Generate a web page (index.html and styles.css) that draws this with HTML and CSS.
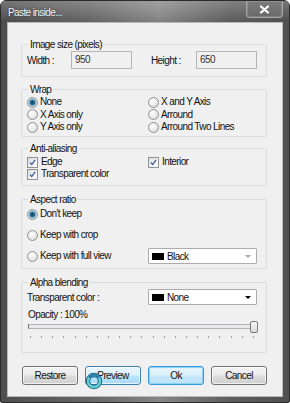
FILE: index.html
```html
<!DOCTYPE html>
<html lang="en">
<head>
    <meta charset="UTF-8">
    <title>Paste inside...</title>
    <link rel="stylesheet" href="styles.css">
</head>
<body>

    <div class="window">
        <!-- Title bar -->
        <div class="titlebar">
            <span class="title">Paste inside...</span>
            <span class="close">
                <svg width="11" height="9" viewBox="0 0 11 9"><path d="M2 1.5 L9 7.5 M9 1.5 L2 7.5" stroke="#fff" stroke-width="2.2" stroke-linecap="round"/></svg>
            </span>
        </div>

        <div class="client">
            <!-- Image size -->
            <div class="group g-size">
                <div class="group-title">Image size (pixels)</div>
                <div class="size-row">
                    <span class="size-label">Width :</span>
                    <span class="field">950</span>
                    <span class="size-label second">Height :</span>
                    <span class="field">650</span>
                </div>
            </div>

            <!-- Wrap -->
            <div class="group g-wrap">
                <div class="group-title">Wrap</div>
                <div class="options wrap-options">
                    <span class="radio checked">None</span>
                    <span class="radio">X and Y Axis</span>
                    <span class="radio">X Axis only</span>
                    <span class="radio">Arround</span>
                    <span class="radio">Y Axis only</span>
                    <span class="radio">Arround Two Lines</span>
                </div>
            </div>

            <!-- Anti-aliasing -->
            <div class="group g-aa">
                <div class="group-title">Anti-aliasing</div>
                <div class="options aa-options">
                    <span class="check"><svg class="box" width="11" height="11" viewBox="0 0 11 11"><path d="M2.5 5.5 L4.6 8 L8.6 2.2" fill="none" stroke="#3c5596" stroke-width="1.5"/></svg>Edge</span>
                    <span class="check"><svg class="box" width="11" height="11" viewBox="0 0 11 11"><path d="M2.5 5.5 L4.6 8 L8.6 2.2" fill="none" stroke="#3c5596" stroke-width="1.5"/></svg>Interior</span>
                    <span class="check"><svg class="box" width="11" height="11" viewBox="0 0 11 11"><path d="M2.5 5.5 L4.6 8 L8.6 2.2" fill="none" stroke="#3c5596" stroke-width="1.5"/></svg>Transparent color</span>
                </div>
            </div>

            <!-- Aspect ratio -->
            <div class="group g-aspect">
                <div class="group-title">Aspect ratio</div>
                <div class="aspect-rows">
                    <div class="aspect-row"><span class="radio checked">Don't keep</span></div>
                    <div class="aspect-row"><span class="radio">Keep with crop</span></div>
                    <div class="aspect-row">
                        <span class="radio">Keep with full view</span>
                        <span class="select disabled"><i class="swatch"></i>Black<b class="arrow"></b></span>
                    </div>
                </div>
            </div>

            <!-- Alpha blending -->
            <div class="group g-alpha">
                <div class="group-title">Alpha blending</div>
                <div class="alpha-row">
                    <span class="alpha-label">Transparent color :</span>
                    <span class="select"><i class="swatch"></i>None<b class="arrow"></b></span>
                </div>
                <div class="opacity-label">Opacity : 100%</div>
                <div class="slider">
                    <span class="thumb"></span>
                </div>
                <div class="ticks">
                    <i></i><i></i><i></i><i></i><i></i><i></i><i></i>
                    <i></i><i></i><i></i><i></i><i></i><i></i><i></i>
                    <i></i><i></i><i></i><i></i><i></i><i></i><i></i>
                </div>
            </div>

            <!-- Buttons -->
            <div class="buttons">
                <span class="btn">Restore</span>
                <span class="btn hover">Preview</span>
                <span class="btn default">Ok</span>
                <span class="btn">Cancel</span>
            </div>
        </div>

        <!-- Busy cursor over the Preview button -->
        <svg class="cursor" width="18" height="18" viewBox="0 0 18 18">
            <circle cx="9" cy="9" r="6" fill="none" stroke="#1d4e6a" stroke-width="4.4"/>
            <circle cx="9" cy="9" r="6" fill="none" stroke="#5ccfd6" stroke-width="2.8"/>
            <path d="M4.2 5.6 A6 6 0 0 1 13.8 5.6" fill="none" stroke="#2a7fae" stroke-width="2.8"/>
        </svg>
    </div>

</body>
</html>
```

FILE: styles.css
```css
/* General Styling */
body {
    margin: 0;
    padding: 0;
    background: #ffffff;
    font-family: 'Liberation Sans', Arial, sans-serif;
    font-size: 10px;
    letter-spacing: -0.6px;
    color: #111;
}

/* Window frame */
.window {
    position: relative;
    width: 290px;
    height: 403px;
    box-sizing: border-box;
    display: flex;
    flex-direction: column;
    border: 1px solid #2b2b2b;
    border-radius: 6px 6px 2px 2px;
    background: linear-gradient(90deg, #4e4e4e 0%, #666666 30%, #868686 55%, #5e5e5e 80%, #505050 100%);
}

.titlebar {
    height: 21px;
    display: flex;
    justify-content: space-between;
    align-items: flex-start;
    padding: 0 6px 0 7px;
    background: linear-gradient(180deg, rgba(255, 255, 255, 0.22) 0%, rgba(255, 255, 255, 0.08) 60%, rgba(0, 0, 0, 0.04) 100%);
}

.title {
    margin-top: 6px;
    line-height: 12px;
    color: #f2f2f2;
    text-shadow: 0 0 2px rgba(0, 0, 0, 0.5);
}

.close {
    width: 35px;
    height: 16px;
    display: flex;
    align-items: center;
    justify-content: center;
    border: 1px solid #a3a3a3;
    border-top: none;
    border-radius: 0 0 4px 4px;
    background: linear-gradient(180deg, #7c7c7c 0%, #6a6a6a 100%);
    box-shadow: inset 0 0 0 1px rgba(255, 255, 255, 0.15);
}

.client {
    flex: 1;
    margin: 0 6px 5px 6px;
    padding: 21px 15px 0 13px;
    background: #f0f0f0;
    border: 1px solid #b9b9b9;
}

/* Group boxes */
.group {
    border: 1px solid #d9dcde;
    border-radius: 2px;
    padding: 0 6px 0 5px;
}

.group-title {
    width: fit-content;
    margin: -7px 0 0 1px;
    padding: 0 2px;
    line-height: 13px;
    background: #f0f0f0;
}

.g-size { padding-bottom: 7px; }
.g-wrap { margin-top: 12px; padding-bottom: 2px; }
.g-aa { margin-top: 11.5px; padding-bottom: 5px; }
.g-aspect { margin-top: 13px; padding-bottom: 4px; }
.g-alpha { margin-top: 13px; padding-bottom: 14px; }

/* Image size */
.size-row {
    display: flex;
    align-items: center;
    height: 18px;
}

.size-label {
    width: 44px;
}

.size-label.second {
    width: 45px;
    margin-left: 19px;
}

.field {
    width: 56px;
    height: 16px;
    line-height: 16px;
    padding-left: 3px;
    box-sizing: content-box;
    border: 1px solid #b5b5b5;
    color: #333;
    background: #f0f0f0;
}

/* Radios and checkboxes */
.options {
    display: grid;
    grid-template-columns: 121px 1fr;
}

.wrap-options {
    grid-auto-rows: 12.5px;
}

.aa-options {
    margin-top: 1px;
    grid-auto-rows: 12px;
}

.radio {
    display: flex;
    align-items: center;
    gap: 2px;
    line-height: 12px;
}

.radio::before {
    content: '';
    width: 9px;
    height: 9px;
    border: 1px solid #8f9293;
    border-radius: 50%;
    background: radial-gradient(circle at 40% 35%, #ffffff 0%, #e6e6e6 60%, #cfcfcf 100%);
    box-sizing: content-box;
}

.radio.checked::before {
    background: radial-gradient(circle, #14405e 0%, #2a6f96 35%, #9cc6dc 55%, #e9e9e9 75%, #d2d2d2 100%);
}

.check {
    display: flex;
    align-items: center;
    gap: 3px;
    line-height: 12px;
}

.check .box {
    border: 1px solid #8f9293;
    box-sizing: border-box;
    background: linear-gradient(135deg, #dcdcdc 0%, #f4f4f4 60%, #ffffff 100%);
}

/* Aspect ratio */
.aspect-rows {
    display: flex;
    flex-direction: column;
    gap: 5px;
}

.aspect-row {
    height: 16px;
    display: grid;
    grid-template-columns: 121px 109px;
    align-items: center;
}

/* Combo boxes */
.select {
    position: relative;
    height: 16px;
    box-sizing: border-box;
    display: flex;
    align-items: center;
    padding-left: 3px;
    border: 1px solid #acacac;
    background: #ffffff;
    border-radius: 1px;
}

.swatch {
    width: 12px;
    height: 7px;
    margin-right: 3px;
    background: #000;
}

.arrow {
    margin-left: auto;
    margin-right: 5px;
    width: 0;
    height: 0;
    border-left: 3px solid transparent;
    border-right: 3px solid transparent;
    border-top: 3px solid #000;
}

.select.disabled .arrow {
    border-top-color: #a8a8a8;
}

/* Alpha blending */
.alpha-row {
    height: 16px;
    display: grid;
    grid-template-columns: 121px 109px;
    align-items: center;
}

.opacity-label {
    margin-top: 4px;
    line-height: 12px;
    padding-left: 1px;
}

.slider {
    position: relative;
    margin: 3px 4px 0 1px;
    height: 5px;
    box-sizing: border-box;
    border: 1px solid #b4b4b4;
    border-left-color: #6d6d6d;
    background: #e7eaea;
}

.thumb {
    position: absolute;
    right: -3px;
    top: -4px;
    width: 6px;
    height: 10px;
    border: 1px solid #7a7a7a;
    border-radius: 2px;
    background: linear-gradient(180deg, #f6f6f6, #dcdcdc);
}

.ticks {
    display: flex;
    justify-content: space-between;
    margin: 7px 6px 0 3px;
    height: 2px;
}

.ticks i {
    width: 1px;
    height: 2px;
    background: #a0a0a0;
}

/* Buttons */
.buttons {
    display: flex;
    gap: 7px;
    margin-top: 13px;
    padding-left: 1px;
}

.btn {
    width: 57px;
    height: 19px;
    box-sizing: border-box;
    display: flex;
    align-items: center;
    justify-content: center;
    border: 1px solid #707070;
    border-radius: 3px;
    background: linear-gradient(180deg, #f2f2f2 0%, #ebebeb 48%, #dddddd 52%, #cfcfcf 100%);
    box-shadow: inset 0 0 0 1px rgba(255, 255, 255, 0.7);
}

.btn.hover {
    border-color: #3c7fb1;
    background: linear-gradient(180deg, #eaf6fd 0%, #d9f0fc 48%, #bee6fd 52%, #a7d9f5 100%);
}

.btn.default {
    border-color: #3399dd;
    background: linear-gradient(180deg, #e6f4fc 0%, #dcf0fb 48%, #c6e7fa 52%, #bde3f8 100%);
    box-shadow: inset 0 0 0 1px #8fd3f5;
}

/* Busy cursor */
.cursor {
    position: absolute;
    left: 84px;
    top: 371px;
}
```
